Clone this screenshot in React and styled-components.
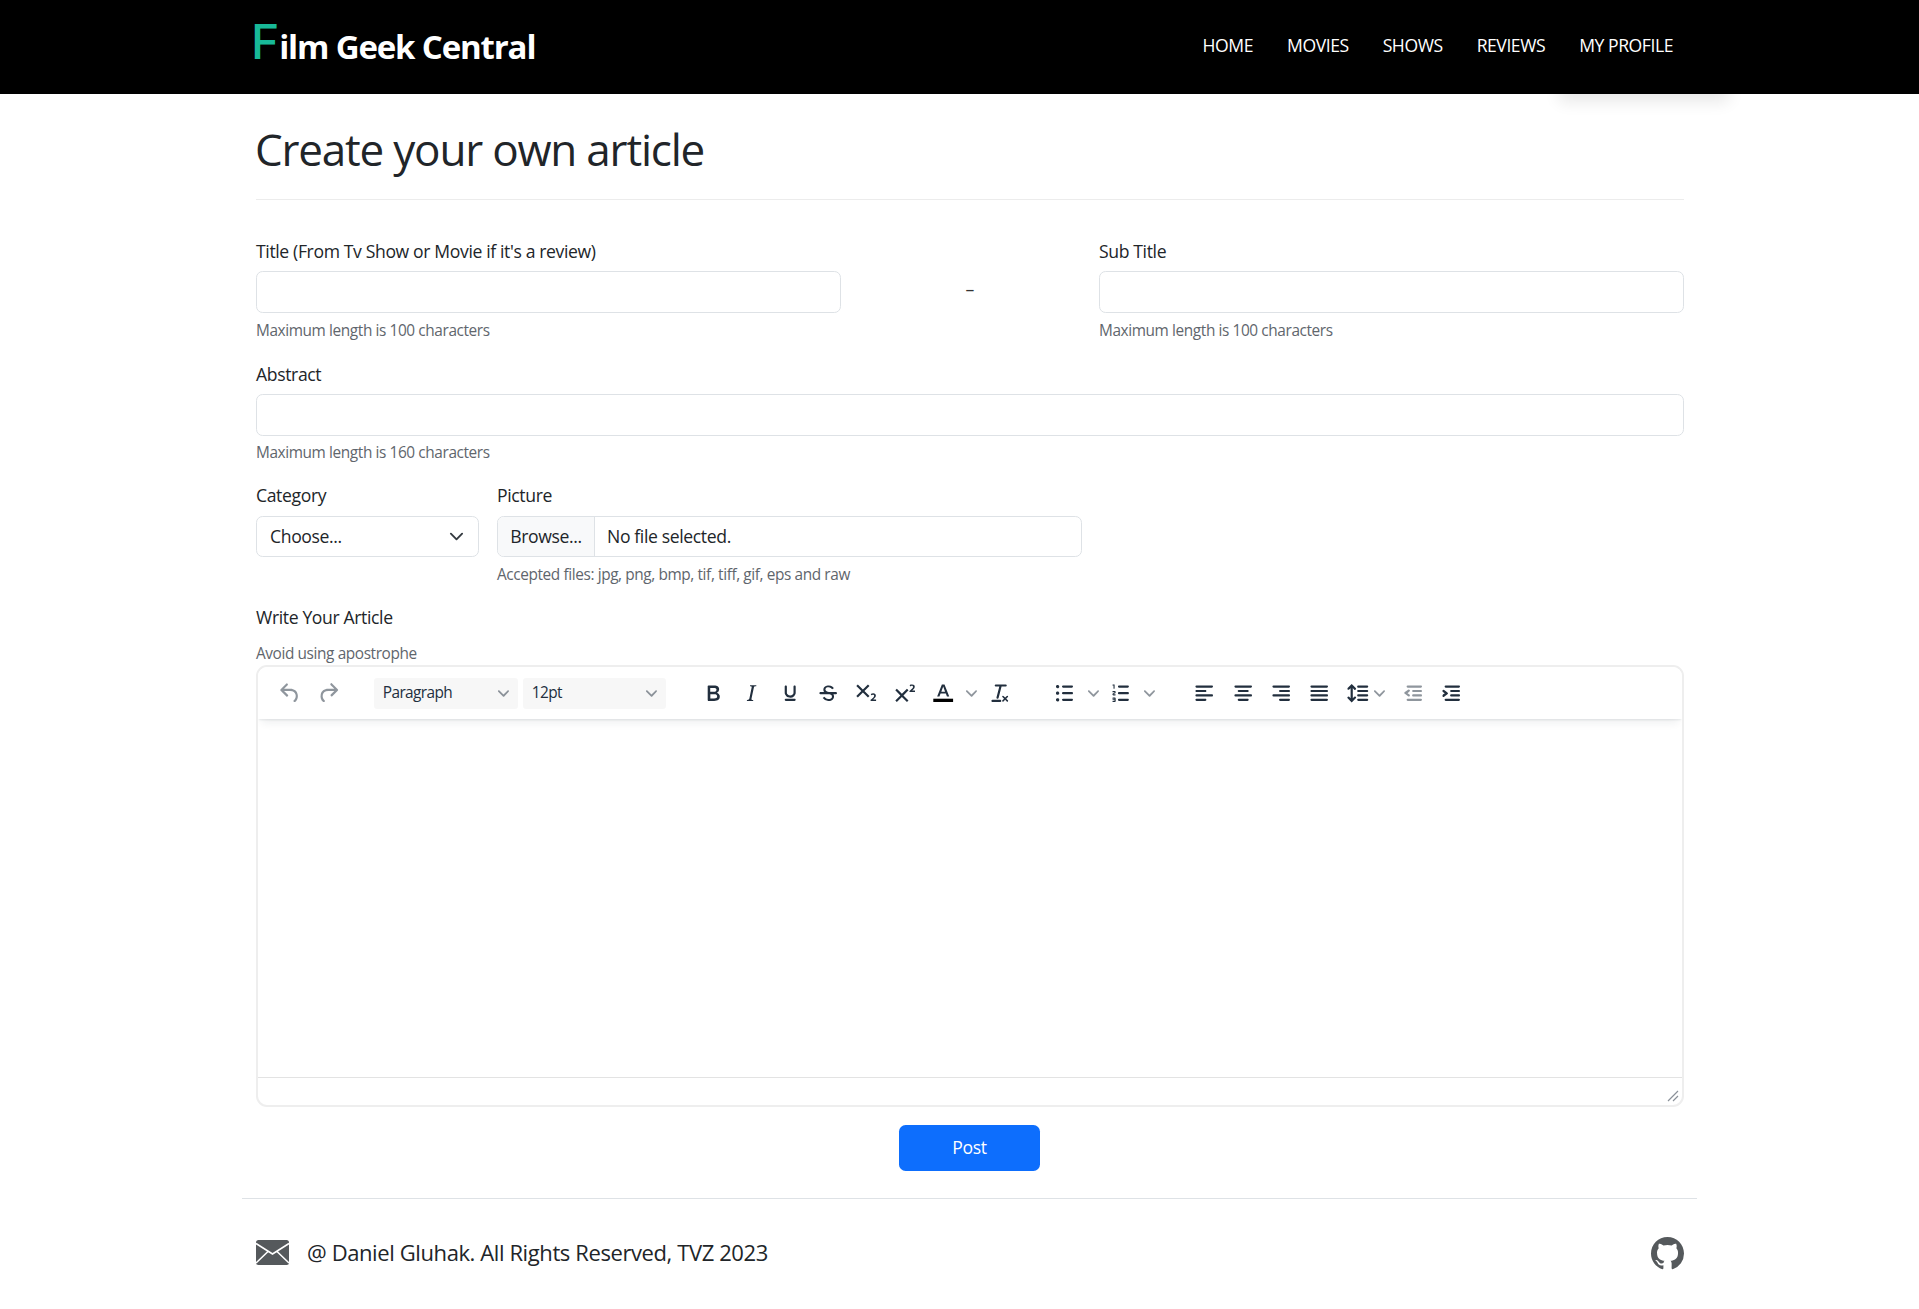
import styled, { createGlobalStyle } from "styled-components";

const ICONS = {
  undo: "M6.4 8H12c3.7 0 6.2 2 6.8 5.1.6 2.7-.4 5.6-2.3 6.8a1 1 0 0 1-1-1.8c1.1-.6 1.8-2.7 1.4-4.6-.5-2.1-2.1-3.5-4.9-3.5H6.4l3.3 3.3a1 1 0 1 1-1.4 1.4l-5-5a1 1 0 0 1 0-1.4l5-5a1 1 0 0 1 1.4 1.4L6.4 8Z",
  redo: "M17.6 10H12c-2.8 0-4.4 1.4-4.9 3.5-.4 2 .3 4 1.4 4.6a1 1 0 1 1-1 1.8c-2-1.2-2.9-4.1-2.3-6.8.6-3 3-5.1 6.8-5.1h5.6l-3.3-3.3a1 1 0 1 1 1.4-1.4l5 5a1 1 0 0 1 0 1.4l-5 5a1 1 0 0 1-1.4-1.4l3.3-3.3Z",
  bold: "M7.8 19c-.3 0-.5 0-.6-.2l-.2-.5V5.7c0-.2 0-.4.2-.5l.6-.2h5c1.5 0 2.7.3 3.5 1 .7.6 1.1 1.4 1.1 2.5a3 3 0 0 1-.6 1.9c-.4.6-1 1-1.6 1.2.4.1.9.3 1.3.6s.8.7 1 1.2c.4.4.5 1 .5 1.6 0 1.3-.4 2.3-1.3 3-.8.7-2.1 1-3.8 1H7.8Zm5-8.3c.6 0 1.2-.1 1.6-.5.4-.3.6-.7.6-1.3 0-1.1-.8-1.7-2.3-1.7H9.3v3.5h3.4Zm.5 6c.7 0 1.3-.1 1.7-.4.4-.4.6-.9.6-1.5s-.2-1-.7-1.4c-.4-.3-1-.4-2-.4H9.4v3.8h4Z",
  italic: "m16.7 4.7-.1.9h-.3c-.6 0-1 0-1.4.3-.3.3-.4.6-.5 1.1l-2.1 9.8v.6c0 .5.4.8 1.4.8h.2l-.2.8H8l.2-.8h.2c1.1 0 1.8-.5 2-1.5l2-9.8.1-.5c0-.6-.4-.8-1.4-.8h-.3l.2-.9h5.8Z",
  underline: "M16 5c.6 0 1 .4 1 1v5.5a4 4 0 0 1-.4 1.8l-1 1.4a5.3 5.3 0 0 1-5.5 1 5 5 0 0 1-1.6-1c-.5-.4-.8-.9-1.1-1.4a4 4 0 0 1-.4-1.8V6c0-.6.4-1 1-1s1 .4 1 1v5.5c0 .3 0 .6.2 1l.6.7a3.3 3.3 0 0 0 2.2.8 3.4 3.4 0 0 0 2.2-.8c.3-.2.4-.5.6-.8l.2-.9V6c0-.6.4-1 1-1ZM8 17h8c.6 0 1 .4 1 1s-.4 1-1 1H8a1 1 0 0 1 0-2Z",
  strike: "M15.6 8.5c-.5-.7-1-1.1-1.3-1.3-.6-.4-1.3-.6-2-.6-2.7 0-2.8 1.7-2.8 2.1 0 1.6 1.8 2 3.2 2.3 4.4.9 4.6 2.8 4.6 3.9 0 1.4-.7 4.1-5 4.1A6.2 6.2 0 0 1 7 16.4l1.5-1.1c.4.6 1.6 2 3.7 2 1.6 0 2.5-.4 3-1.2.4-.8.3-2-.8-2.6-.7-.4-1.6-.7-2.9-1-1-.2-3.9-.8-3.9-3.6C7.6 6 10.3 5 12.4 5c2.9 0 4.2 1.6 4.7 2.4l-1.5 1.1Z M5 11h14a1 1 0 0 1 0 2H5a1 1 0 0 1 0-2Z",
  sub: "m10.4 10 4.6 4.6-1.4 1.4L9 11.4 4.4 16 3 14.6 7.6 10 3 5.4 4.4 4 9 8.6 13.6 4 15 5.4 10.4 10ZM21 19h-5v-1l1-.8 1.7-1.6c.3-.4.5-.8.5-1.2 0-.3 0-.6-.2-.7-.2-.2-.5-.3-.9-.3a2 2 0 0 0-.8.2l-.7.3-.4-1.1 1-.6 1.2-.2c.8 0 1.4.3 1.8.7.4.4.6.9.6 1.5s-.2 1.1-.5 1.6a8 8 0 0 1-1.3 1.3l-.6.6h2.6V19Z",
  sup: "M15 9.4 10.4 14l4.6 4.6-1.4 1.4L9 15.4 4.4 20 3 18.6 7.6 14 3 9.4 4.4 8 9 12.6 13.6 8 15 9.4Zm5.9 1.6h-5v-1l1-.8 1.7-1.6c.3-.5.5-.9.5-1.3 0-.3 0-.5-.2-.7-.2-.2-.5-.3-.9-.3l-.8.2-.7.4-.4-1.2c.2-.2.5-.4 1-.5.3-.2.8-.2 1.2-.2.8 0 1.4.2 1.8.6.4.4.6 1 .6 1.6 0 .5-.2 1-.5 1.5l-1.3 1.4-.6.5h2.6V11Z",
  clear: "M13.2 6a1 1 0 0 1 0 .2l-2.6 10a1 1 0 0 1-1 .8h-.2a.8.8 0 0 1-.8-1l2.6-10H8a1 1 0 1 1 0-2h9a1 1 0 0 1 0 2h-3.8ZM5 18h7a1 1 0 0 1 0 2H5a1 1 0 0 1 0-2Zm13 1.5L16.5 18 15 19.5a.7.7 0 0 1-1-1l1.5-1.5-1.5-1.5a.7.7 0 0 1 1-1l1.5 1.5 1.5-1.5a.7.7 0 0 1 1 1L17.5 17l1.5 1.5a.7.7 0 0 1-1 1Z",
  bullets: "M11 5h8c.6 0 1 .4 1 1s-.4 1-1 1h-8a1 1 0 0 1 0-2Zm0 6h8c.6 0 1 .4 1 1s-.4 1-1 1h-8a1 1 0 0 1 0-2Zm0 6h8c.6 0 1 .4 1 1s-.4 1-1 1h-8a1 1 0 0 1 0-2ZM4.5 6c0-.4.1-.8.4-1 .3-.4.7-.5 1.1-.5.4 0 .8.1 1 .4.4.3.5.7.5 1.1 0 .4-.1.8-.4 1-.3.4-.7.5-1.1.5-.4 0-.8-.1-1-.4-.4-.3-.5-.7-.5-1.1Zm0 6c0-.4.1-.8.4-1 .3-.4.7-.5 1.1-.5.4 0 .8.1 1 .4.4.3.5.7.5 1.1 0 .4-.1.8-.4 1-.3.4-.7.5-1.1.5-.4 0-.8-.1-1-.4-.4-.3-.5-.7-.5-1.1Zm0 6c0-.4.1-.8.4-1 .3-.4.7-.5 1.1-.5.4 0 .8.1 1 .4.4.3.5.7.5 1.1 0 .4-.1.8-.4 1-.3.4-.7.5-1.1.5-.4 0-.8-.1-1-.4-.4-.3-.5-.7-.5-1.1Z",
  numbers: "M10 17h8c.6 0 1 .4 1 1s-.4 1-1 1h-8a1 1 0 0 1 0-2Zm0-6h8c.6 0 1 .4 1 1s-.4 1-1 1h-8a1 1 0 0 1 0-2Zm0-6h8c.6 0 1 .4 1 1s-.4 1-1 1h-8a1 1 0 1 1 0-2ZM6 4v3.5c0 .3-.2.5-.5.5a.5.5 0 0 1-.5-.5V5h-.5a.5.5 0 0 1 0-1H6Zm-1 8.8.2.2h1.3c.3 0 .5.2.5.5s-.2.5-.5.5H4.9a1 1 0 0 1-.9-1V13c0-.4.3-.8.6-1l1.2-.4.2-.3a.2.2 0 0 0-.2-.2H4.5a.5.5 0 0 1-.5-.5c0-.3.2-.5.5-.5h1.6c.5 0 .9.4.9 1v.1c0 .4-.3.8-.6 1l-1.2.4-.2.3ZM7 17v2c0 .6-.4 1-1 1H4.5a.5.5 0 0 1 0-1h1.2c.2 0 .3-.1.3-.3 0-.2-.1-.3-.3-.3H4.4a.4.4 0 1 1 0-.8h1.3c.2 0 .3-.1.3-.3 0-.2-.1-.3-.3-.3H4.5a.5.5 0 1 1 0-1H6c.6 0 1 .4 1 1Z",
  alignLeft: "M5 5h14c.6 0 1 .4 1 1s-.4 1-1 1H5a1 1 0 1 1 0-2Zm0 4h8c.6 0 1 .4 1 1s-.4 1-1 1H5a1 1 0 1 1 0-2Zm0 8h8c.6 0 1 .4 1 1s-.4 1-1 1H5a1 1 0 0 1 0-2Zm0-4h14c.6 0 1 .4 1 1s-.4 1-1 1H5a1 1 0 0 1 0-2Z",
  alignCenter: "M5 5h14c.6 0 1 .4 1 1s-.4 1-1 1H5a1 1 0 1 1 0-2Zm3 4h8c.6 0 1 .4 1 1s-.4 1-1 1H8a1 1 0 1 1 0-2Zm0 8h8c.6 0 1 .4 1 1s-.4 1-1 1H8a1 1 0 0 1 0-2Zm-3-4h14c.6 0 1 .4 1 1s-.4 1-1 1H5a1 1 0 0 1 0-2Z",
  alignRight: "M5 5h14c.6 0 1 .4 1 1s-.4 1-1 1H5a1 1 0 1 1 0-2Zm6 4h8c.6 0 1 .4 1 1s-.4 1-1 1h-8a1 1 0 0 1 0-2Zm0 8h8c.6 0 1 .4 1 1s-.4 1-1 1h-8a1 1 0 0 1 0-2Zm-6-4h14c.6 0 1 .4 1 1s-.4 1-1 1H5a1 1 0 0 1 0-2Z",
  justify: "M5 5h14c.6 0 1 .4 1 1s-.4 1-1 1H5a1 1 0 1 1 0-2Zm0 4h14c.6 0 1 .4 1 1s-.4 1-1 1H5a1 1 0 1 1 0-2Zm0 4h14c.6 0 1 .4 1 1s-.4 1-1 1H5a1 1 0 0 1 0-2Zm0 4h14a1 1 0 0 1 0 2H5a1 1 0 0 1 0-2Z",
  lineHeight: "M21 5a1 1 0 0 1 .1 2H13a1 1 0 0 1-.1-2H21zm0 4a1 1 0 0 1 .1 2H13a1 1 0 0 1-.1-2H21zm0 4a1 1 0 0 1 .1 2H13a1 1 0 0 1-.1-2H21zm0 4a1 1 0 0 1 .1 2H13a1 1 0 0 1-.1-2H21zM7 3.6l3.7 3.7a1 1 0 0 1-1.3 1.5h-.1L8 7.3v9.2l1.3-1.3a1 1 0 0 1 1.3 0h.1c.4.4.4 1 0 1.3v.1L7 20.4l-3.7-3.7a1 1 0 0 1 1.3-1.5h.1L6 16.7V7.4L4.7 8.7a1 1 0 0 1-1.3 0h-.1a1 1 0 0 1 0-1.3v-.1L7 3.6z",
  outdent: "M7 5h12c.6 0 1 .4 1 1s-.4 1-1 1H7a1 1 0 1 1 0-2Zm5 4h7c.6 0 1 .4 1 1s-.4 1-1 1h-7a1 1 0 0 1 0-2Zm0 4h7c.6 0 1 .4 1 1s-.4 1-1 1h-7a1 1 0 0 1 0-2Zm-5 4h12a1 1 0 0 1 0 2H7a1 1 0 0 1 0-2Zm1.6-3.8a1 1 0 0 1-1.2 1.6l-3-2.2a1 1 0 0 1 0-1.6l3-2.2a1 1 0 0 1 1.2 1.6L6.8 12l1.8 1.2Z",
  indent: "M7 5h12c.6 0 1 .4 1 1s-.4 1-1 1H7a1 1 0 1 1 0-2Zm5 4h7c.6 0 1 .4 1 1s-.4 1-1 1h-7a1 1 0 0 1 0-2Zm0 4h7c.6 0 1 .4 1 1s-.4 1-1 1h-7a1 1 0 0 1 0-2Zm-5 4h12a1 1 0 0 1 0 2H7a1 1 0 0 1 0-2Zm-2.6-3.8L6.2 12l-1.8-1.2a1 1 0 0 1 1.2-1.6l3 2.2a1 1 0 0 1 0 1.6l-3 2.2a1 1 0 1 1-1.2-1.6Z",
};

const GITHUB = "M8 0C3.58 0 0 3.58 0 8c0 3.54 2.29 6.53 5.47 7.59.4.07.55-.17.55-.38 0-.19-.01-.82-.01-1.49-2.01.37-2.53-.49-2.69-.94-.09-.23-.48-.94-.82-1.13-.28-.15-.68-.52-.01-.53.63-.01 1.08.58 1.23.82.72 1.21 1.87.87 2.33.66.07-.52.28-.87.51-1.07-1.78-.2-3.64-.89-3.64-3.95 0-.87.31-1.59.82-2.15-.08-.2-.36-1.02.08-2.12 0 0 .67-.21 2.2.82.64-.18 1.32-.27 2-.27.68 0 1.36.09 2 .27 1.53-1.04 2.2-.82 2.2-.82.44 1.1.16 1.92.08 2.12.51.56.82 1.27.82 2.15 0 3.07-1.87 3.75-3.65 3.95.29.25.54.73.54 1.48 0 1.07-.01 1.93-.01 2.2 0 .21.15.46.55.38A8.012 8.012 0 0 0 16 8c0-4.42-3.58-8-8-8z";

const GlobalStyle = createGlobalStyle`
  * { box-sizing: border-box; }
  body {
    margin: 0;
    background: #fff;
    color: #212529;
    font-family: "Open Sans", "Noto Sans", sans-serif;
    font-size: 17.6px;
    line-height: 26.4px;
    letter-spacing: -0.37px;
  }
`;

const Icon = ({ name, muted }) => (
  <ToolIcon viewBox="0 0 24 24" $muted={muted}>
    <path d={ICONS[name]} />
  </ToolIcon>
);

const Chevron = () => (
  <ChevronIcon viewBox="0 0 10 10">
    <path d="M8.7 2.2c.3-.3.8-.3 1 0 .4.4.4.9 0 1.2L5.7 7.8c-.3.3-.9.3-1.2 0L.2 3.4a.8.8 0 0 1 0-1.2c.3-.3.8-.3 1.1 0L5 6l3.7-3.8Z" />
  </ChevronIcon>
);

const Field = ({ label, help }) => (
  <div>
    <Label>{label}</Label>
    <TextInput type="text" />
    <Help>{help}</Help>
  </div>
);

const App = () => {
  return (
    <>
      <GlobalStyle />
      <Navbar>
        <NavInner>
          <Brand>
            <BrandF>F</BrandF>ilm Geek Central
          </Brand>
          <NavLinks>
            <NavLink>HOME</NavLink>
            <NavLink>MOVIES</NavLink>
            <NavLink>SHOWS</NavLink>
            <NavLink>REVIEWS</NavLink>
            <NavLink>MY PROFILE</NavLink>
          </NavLinks>
        </NavInner>
      </Navbar>

      <Main>
        <PageTitle>Create your own article</PageTitle>

        <TitleRow>
          <Field label="Title (From Tv Show or Movie if it's a review)" help="Maximum length is 100 characters" />
          <Dash>–</Dash>
          <Field label="Sub Title" help="Maximum length is 100 characters" />
        </TitleRow>

        <Field label="Abstract" help="Maximum length is 160 characters" />

        <UploadRow>
          <div>
            <Label>Category</Label>
            <SelectBox>
              Choose...
              <SelectArrow viewBox="0 0 16 16">
                <path d="m2 5 6 6 6-6" />
              </SelectArrow>
            </SelectBox>
          </div>
          <div>
            <Label>Picture</Label>
            <FileBox>
              <BrowseButton>Browse...</BrowseButton>
              <FileName>No file selected.</FileName>
            </FileBox>
            <Help>Accepted files: jpg, png, bmp, tif, tiff, gif, eps and raw</Help>
          </div>
        </UploadRow>

        <EditorLabel>Write Your Article</EditorLabel>
        <Help>Avoid using apostrophe</Help>

        <Editor>
          <Toolbar>
            <ToolGroup>
              <ToolButton><Icon name="undo" muted /></ToolButton>
              <ToolButton><Icon name="redo" muted /></ToolButton>
            </ToolGroup>
            <SelectGroup>
              <ToolSelect $width={144}>Paragraph<Chevron /></ToolSelect>
              <ToolSelect $width={143}>12pt<Chevron /></ToolSelect>
            </SelectGroup>
            <ToolGroup>
              <ToolButton><Icon name="bold" /></ToolButton>
              <ToolButton><Icon name="italic" /></ToolButton>
              <ToolButton><Icon name="underline" /></ToolButton>
              <ToolButton><Icon name="strike" /></ToolButton>
              <ToolButton><Icon name="sub" /></ToolButton>
              <ToolButton><Icon name="sup" /></ToolButton>
              <ToolButton>
                <ToolIcon viewBox="0 0 24 24">
                  <path d="M10.8 4h2.4l4.3 11h-2.1l-1-2.8H9.6l-1 2.8H6.5L10.8 4Zm-.5 6.6h3.4L12 6l-1.7 4.6Z" />
                  <BlackBar x="3" y="17" width="18" height="3" />
                </ToolIcon>
              </ToolButton>
              <ChevronButton><Chevron /></ChevronButton>
              <ToolButton><Icon name="clear" /></ToolButton>
            </ToolGroup>
            <ToolGroup>
              <ToolButton><Icon name="bullets" /></ToolButton>
              <ChevronButton><Chevron /></ChevronButton>
              <ToolButton><Icon name="numbers" /></ToolButton>
              <ChevronButton><Chevron /></ChevronButton>
            </ToolGroup>
            <ToolGroup>
              <ToolButton><Icon name="alignLeft" /></ToolButton>
              <ToolButton><Icon name="alignCenter" /></ToolButton>
              <ToolButton><Icon name="alignRight" /></ToolButton>
              <ToolButton><Icon name="justify" /></ToolButton>
              <LineHeightButton><Icon name="lineHeight" /><Chevron /></LineHeightButton>
              <ToolButton><Icon name="outdent" muted /></ToolButton>
              <ToolButton><Icon name="indent" /></ToolButton>
            </ToolGroup>
          </Toolbar>
          <EditArea />
          <StatusBar>
            <svg width="12" height="12" viewBox="0 0 12 12">
              <HandleLine d="M1 11 11 1M6 11l5-5" />
            </svg>
          </StatusBar>
        </Editor>

        <SubmitRow>
          <PostButton>Post</PostButton>
        </SubmitRow>
      </Main>

      <Footer>
        <FooterLeft>
          <svg width="33" height="25" viewBox="0 0 33 25">
            <MailBody x="0" y="0" width="33" height="25" rx="2.5" />
            <MailFlap d="M0 3.5 16.5 14 33 3.5M0 23l12-11.5M33 23 21 11.5" />
          </svg>
          <FooterText>@ Daniel Gluhak. All Rights Reserved, TVZ 2023</FooterText>
        </FooterLeft>
        <GithubLogo viewBox="0 0 16 16">
          <path d={GITHUB} />
        </GithubLogo>
      </Footer>
    </>
  );
};

const Navbar = styled.nav`
  background: #000;
  height: 94px;
  position: relative;

  &::after {
    content: "";
    position: absolute;
    bottom: 0;
    right: 190px;
    width: 170px;
    height: 30px;
    background: #000;
    box-shadow: 0 8px 16px rgba(0, 0, 0, 0.09);
  }
`;

const NavInner = styled.div`
  width: 1428px;
  height: 100%;
  margin-left: 251px;
  display: flex;
  align-items: center;
  justify-content: space-between;
  position: relative;
  z-index: 1;
`;

const Brand = styled.div`
  display: flex;
  align-items: baseline;
  color: #fff;
  font-size: 33px;
  font-weight: 700;
  line-height: 1;
  margin-top: -11px;
  letter-spacing: -1.15px;
`;

const BrandF = styled.span`
  color: #18b998;
  font-family: "Inter", sans-serif;
  font-size: 48px;
  font-weight: 500;
  line-height: 1;
  margin-right: 1px;
`;

const NavLinks = styled.div`
  display: flex;
  gap: 34px;
  padding-right: 6px;
  margin-top: -4px;
`;

const NavLink = styled.a`
  color: #fff;
  font-size: 17.6px;
  font-weight: 400;
  letter-spacing: -0.45px;
`;

const Main = styled.main`
  width: 1428px;
  margin-left: 256px;
`;

const PageTitle = styled.h1`
  margin: 0 0 38px;
  padding: 29px 0 23px;
  font-size: 44px;
  font-weight: 400;
  line-height: 53px;
  letter-spacing: -1.2px;
  text-indent: -1px;
  border-bottom: 1px solid #ececec;
`;

const TitleRow = styled.div`
  display: grid;
  grid-template-columns: 584.5px 1fr 585px;
  margin-bottom: 19px;
`;

const UploadRow = styled.div`
  display: grid;
  grid-template-columns: 223px 585px;
  column-gap: 18px;
  margin: 18px 0 18px;
`;

const Dash = styled.div`
  text-align: center;
  margin-top: 38px;
  font-size: 17.6px;
  color: #333;
`;

const Label = styled.label`
  display: block;
  margin-bottom: 7px;
`;

const EditorLabel = styled.label`
  display: block;
  margin-bottom: 12px;
`;

const TextInput = styled.input`
  display: block;
  width: 100%;
  height: 41.6px;
  border: 1px solid #dee2e6;
  border-radius: 6.6px;
  background: #fff;
  outline: none;
`;

const Help = styled.div`
  margin-top: 5.6px;
  font-size: 15.4px;
  line-height: 23px;
  color: #5f666d;
  letter-spacing: -0.4px;
`;

const SelectBox = styled.div`
  position: relative;
  height: 41.6px;
  padding: 0 13px;
  display: flex;
  align-items: center;
  border: 1px solid #dee2e6;
  border-radius: 6.6px;
`;

const SelectArrow = styled.svg`
  position: absolute;
  right: 14px;
  top: 12px;
  width: 15px;
  height: 15px;
  fill: none;
  stroke: #343a40;
  stroke-width: 2;
  stroke-linecap: round;
  stroke-linejoin: round;
`;

const FileBox = styled.div`
  display: flex;
  height: 41.6px;
  border: 1px solid #dee2e6;
  border-radius: 6.6px;
  overflow: hidden;
`;

const BrowseButton = styled.div`
  width: 97px;
  display: flex;
  align-items: center;
  justify-content: center;
  background: #f8f9fa;
  border-right: 1px solid #dee2e6;
`;

const FileName = styled.div`
  display: flex;
  align-items: center;
  padding-left: 12px;
`;

const Editor = styled.div`
  height: 441.5px;
  display: flex;
  flex-direction: column;
  border: 2px solid #eee;
  border-radius: 11px;
  overflow: hidden;
`;

const Toolbar = styled.div`
  height: 52px;
  flex: none;
  display: flex;
  align-items: center;
  padding-left: 13px;
  gap: 26px;
  background: #fff;
  box-shadow: 0 2px 2px -1px rgba(34, 47, 62, 0.1), 0 8px 8px -4px rgba(34, 47, 62, 0.07);
  position: relative;
`;

const ToolGroup = styled.div`
  display: flex;
  align-items: center;
`;

const SelectGroup = styled.div`
  display: flex;
  gap: 5px;
  margin-right: 2px;
`;

const ToolButton = styled.div`
  width: 38.4px;
  height: 37px;
  display: flex;
  align-items: center;
  justify-content: center;
`;

const ChevronButton = styled.div`
  width: 18.5px;
  height: 37px;
  display: flex;
  align-items: center;
  justify-content: center;
`;

const LineHeightButton = styled.div`
  width: 55px;
  height: 37px;
  display: flex;
  align-items: center;
  padding-left: 5.5px;
  gap: 3px;
`;

const ToolIcon = styled.svg`
  width: 26.4px;
  height: 26.4px;
  flex: none;
  fill: #222f3e;
  opacity: ${(p) => (p.$muted ? 0.5 : 1)};
`;

const BlackBar = styled.rect`
  fill: #000;
`;

const ChevronIcon = styled.svg`
  width: 11px;
  height: 11px;
  flex: none;
  fill: #222f3e;
  opacity: 0.5;
`;

const ToolSelect = styled.div`
  width: ${(p) => p.$width}px;
  height: 31px;
  display: flex;
  align-items: center;
  justify-content: space-between;
  padding: 0 9px;
  background: #f7f7f7;
  border-radius: 3.3px;
  color: #222f3e;
  font-size: 15.4px;
  letter-spacing: -0.6px;
`;

const EditArea = styled.div`
  flex: 1;
`;

const StatusBar = styled.div`
  height: 28px;
  flex: none;
  display: flex;
  justify-content: flex-end;
  align-items: flex-end;
  padding: 0 3px 3px 0;
  border-top: 1px solid #e3e3e3;
`;

const HandleLine = styled.path`
  fill: none;
  stroke: #8a9099;
  stroke-width: 1.2;
`;

const SubmitRow = styled.div`
  display: flex;
  justify-content: center;
  margin-top: 18px;
  padding-right: 1px;
`;

const PostButton = styled.button`
  width: 141px;
  height: 46px;
  border: none;
  border-radius: 6.6px;
  background: #0d6efd;
  color: #fff;
  font: inherit;
  letter-spacing: -0.37px;
`;

const Footer = styled.footer`
  width: 1455px;
  margin: 27px 0 0 242px;
  height: 112px;
  padding: 37px 13px 0 14px;
  display: flex;
  align-items: flex-start;
  justify-content: space-between;
  border-top: 1px solid #dee2e6;
`;

const FooterLeft = styled.div`
  display: flex;
  align-items: center;
  gap: 18px;
  height: 33px;
`;

const FooterText = styled.span`
  font-size: 22px;
  letter-spacing: -0.4px;
`;

const MailBody = styled.rect`
  fill: #55595c;
`;

const MailFlap = styled.path`
  fill: none;
  stroke: #fff;
  stroke-width: 1.6;
`;

const GithubLogo = styled.svg`
  width: 33px;
  height: 33px;
  margin-top: 1px;
  fill: #55595c;
`;

export default App;
